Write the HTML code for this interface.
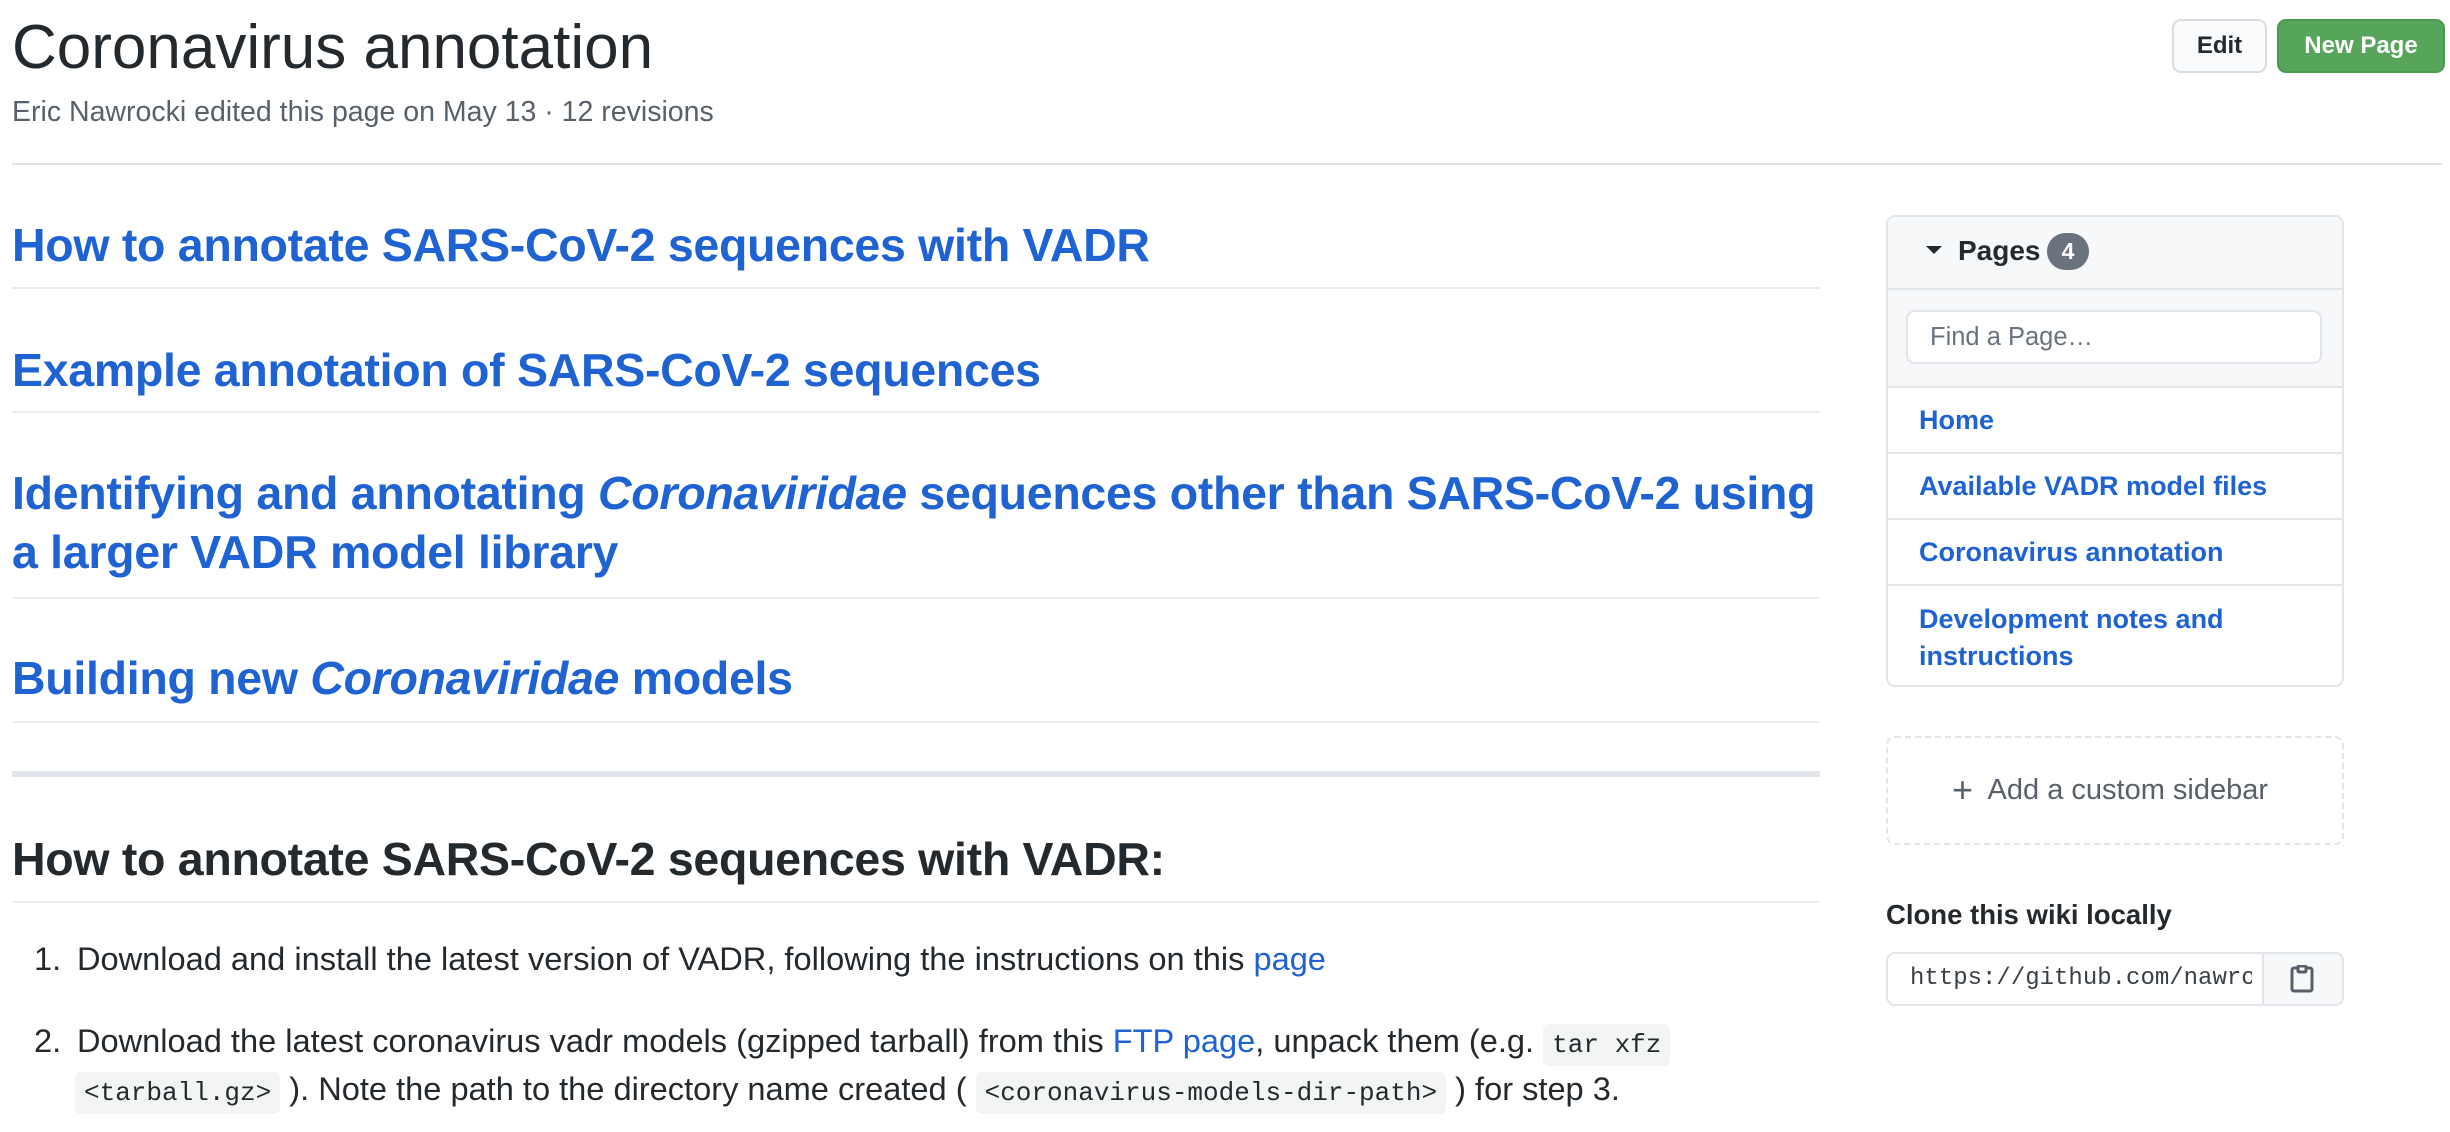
<!DOCTYPE html>
<html><head><meta charset="utf-8">
<style>
*{box-sizing:border-box;margin:0;padding:0}
body{width:2450px;height:1132px;background:#fff;font-family:"Liberation Sans",Arial,sans-serif;color:#24292e;position:relative;overflow:hidden}
.a{position:absolute;white-space:nowrap}
.blue{color:#1f63d2}
.h{font-weight:bold;font-size:46.5px;letter-spacing:-0.3px}
.line{position:absolute;left:12px;width:1808px;height:2px;background:#eaecef}
code{font-family:"Liberation Mono",monospace;font-size:26px;background:#f3f4f4;border-radius:6px;padding:6px 9px}
.row{position:absolute;left:1887px;width:456px;border-top:2px solid #e1e4e8}
.row span{position:absolute;left:32px;font-weight:bold;font-size:27px;color:#1f63d2;line-height:37px}
</style></head><body>

<div class="a" style="left:12px;top:12px;font-size:62px;line-height:72px">Coronavirus annotation</div>
<div class="a" style="left:12px;top:94px;font-size:28.5px;color:#586069;line-height:36px">Eric Nawrocki edited this page on May 13 · 12 revisions</div>

<div class="a" style="left:2172px;top:19px;width:95px;height:54px;border:2px solid #d8dbdf;border-radius:9px;background:#fafbfc;font-size:24px;font-weight:bold;line-height:50px;text-align:center">Edit</div>
<div class="a" style="left:2277px;top:19px;width:168px;height:54px;border:2px solid #4a9a4f;border-radius:9px;background:#57a55a;color:#fff;font-size:24px;font-weight:bold;line-height:50px;text-align:center">New Page</div>

<div class="a" style="left:12px;top:163px;width:2430px;height:2px;background:#e1e4e8"></div>

<div class="a h blue" style="left:12px;top:215px;line-height:60px">How to annotate SARS-CoV-2 sequences with VADR</div>
<div class="line" style="top:287px"></div>
<div class="a h blue" style="left:12px;top:340px;line-height:60px">Example annotation of SARS-CoV-2 sequences</div>
<div class="line" style="top:411px"></div>
<div class="a h blue" style="left:12px;top:464px;line-height:59px">Identifying and annotating <i>Coronaviridae</i> sequences other than SARS-CoV-2 using<br>a larger VADR model library</div>
<div class="line" style="top:597px"></div>
<div class="a h blue" style="left:12px;top:648px;line-height:60px">Building new <i>Coronaviridae</i> models</div>
<div class="line" style="top:721px"></div>

<div class="a" style="left:12px;top:771px;width:1808px;height:6px;background:#e1e4e8"></div>

<div class="a" style="left:12px;top:829px;font-size:46.5px;font-weight:bold;line-height:60px;letter-spacing:-0.3px">How to annotate SARS-CoV-2 sequences with VADR:</div>
<div class="line" style="top:901px"></div>

<div class="a" style="left:34px;top:940px;font-size:32.6px;line-height:38px">1.</div>
<div class="a" style="left:77px;top:940px;font-size:32.6px;line-height:38px">Download and install the latest version of VADR, following the instructions on this <span class="blue">page</span></div>
<div class="a" style="left:34px;top:1022px;font-size:32.6px;line-height:38px">2.</div>
<div class="a" style="left:77px;top:1022px;font-size:32.6px;line-height:38px">Download the latest coronavirus vadr models (gzipped tarball) from this <span class="blue">FTP page</span>, unpack them (e.g. <code>tar xfz</code></div>
<div class="a" style="left:77px;top:1070px;font-size:32.6px;line-height:38px"><code style="margin-left:-2px">&lt;tarball.gz&gt;</code> ). Note the path to the directory name created ( <code>&lt;coronavirus-models-dir-path&gt;</code> ) for step 3.</div>

<!-- sidebar -->
<div class="a" style="left:1886px;top:215px;width:458px;height:472px;border:2px solid #e1e4e8;border-radius:9px;overflow:hidden">
  <div style="position:absolute;left:0;top:0;width:100%;height:170px;background:#f6f8fa"></div>
</div>
<div class="a" style="left:1926px;top:246px;width:0;height:0;border-left:8px solid transparent;border-right:8px solid transparent;border-top:8px solid #24292e"></div>
<div class="a" style="left:1958px;top:232px;font-size:28px;font-weight:bold;line-height:38px">Pages</div>
<div class="a" style="left:2047px;top:233px;width:42px;height:37px;border-radius:19px;background:#6a737d;color:#fff;font-size:23px;font-weight:bold;text-align:center;line-height:37px">4</div>
<div class="a" style="left:1887px;top:288px;width:456px;height:2px;background:#e1e4e8"></div>
<div class="a" style="left:1906px;top:310px;width:416px;height:54px;border:2px solid #e1e4e8;border-radius:9px;background:#fff;font-size:25.5px;color:#6a737d;line-height:50px;padding-left:22px">Find a Page…</div>
<div class="row" style="top:386px;height:67px"><span style="top:14px">Home</span></div>
<div class="row" style="top:452px;height:67px"><span style="top:14px">Available VADR model files</span></div>
<div class="row" style="top:518px;height:67px"><span style="top:14px">Coronavirus annotation</span></div>
<div class="row" style="top:584px;height:100px"><span style="top:15px">Development notes and<br>instructions</span></div>

<div class="a" style="left:1886px;top:736px;width:458px;height:109px;border:2px dashed #e1e4e8;border-radius:9px"></div>
<div class="a" style="left:1952px;top:772px;font-size:29px;color:#586069;line-height:36px"><span style="font-size:36px;vertical-align:-3px">+</span>&nbsp; Add a custom sidebar</div>

<div class="a" style="left:1886px;top:897px;font-size:27.5px;font-weight:bold;line-height:36px">Clone this wiki locally</div>
<div class="a" style="left:1886px;top:952px;width:458px;height:54px;border:2px solid #e1e4e8;border-radius:9px;overflow:hidden">
  <div style="position:absolute;left:22px;top:0;line-height:50px;font-family:'Liberation Mono',monospace;font-size:24px;color:#3a4047;width:342px;overflow:hidden">https://github.com/nawrocki/vadr.wiki.git</div>
  <div style="position:absolute;left:374px;top:0;width:82px;height:50px;background:#f6f8fa;border-left:2px solid #e1e4e8"></div>
</div>
<svg class="a" style="left:2290px;top:965px" width="24" height="28" viewBox="0 0 24 28"><rect x="2" y="3" width="20" height="23" rx="2" fill="none" stroke="#57606a" stroke-width="3"/><rect x="8" y="1" width="8" height="6" rx="1" fill="#f6f8fa" stroke="#57606a" stroke-width="3"/></svg>

</body></html>
